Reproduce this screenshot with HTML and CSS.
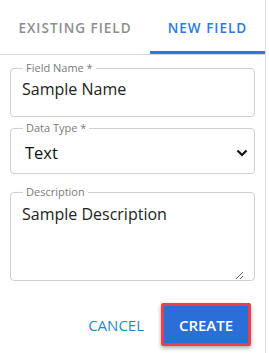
FILE: index.html
```html
<!DOCTYPE html>
<html lang="en">
<head>
  <meta charset="UTF-8" />
  <title>New Field</title>
  <link rel="stylesheet" href="styles.css">
</head>
<body>
  <div class="panel">
    <div class="tabs">
      <div class="tab">Existing Field</div>
      <div class="tab active">New Field</div>
    </div>

    <form class="form">
      <fieldset class="field name">
        <legend>Field Name *</legend>
        <input type="text" value="Sample Name" />
      </fieldset>

      <fieldset class="field type">
        <legend>Data Type *</legend>
        <div class="select">
          <span>Text</span>
          <svg width="12" height="8" viewBox="0 0 12 8"><path d="M1.5 1.5 L6 6 L10.5 1.5" fill="none" stroke="#111" stroke-width="2.2"/></svg>
        </div>
      </fieldset>

      <fieldset class="field area">
        <legend>Description</legend>
        <textarea>Sample Description</textarea>
      </fieldset>

      <div class="actions">
        <button type="button" class="cancel">Cancel</button>
        <button type="button" class="create">Create</button>
      </div>
    </form>
  </div>
</body>
</html>
```

FILE: styles.css
```css
* {
  box-sizing: border-box;
}

body {
  margin: 0;
  font-family: 'Open Sans', sans-serif;
  background-color: #fff;
  color: #222;
}

.panel {
  width: 266px;
  height: 353px;
  border-right: 1px solid #dedede;
  background-color: #fff;
}

.tabs {
  display: flex;
  height: 55px;
  border-bottom: 1px solid #d8d8d8;
}

.tab {
  width: 150px;
  padding-top: 19px;
  text-align: center;
  text-transform: uppercase;
  font-size: 13.5px;
  font-weight: 600;
  letter-spacing: 1px;
  color: #8e8e8e;
}

.tab.active {
  width: 115px;
  color: #2b7ae0;
  border-bottom: 3px solid #2b7ae0;
}

.form {
  padding: 7px 10px 0 10px;
}

.field {
  margin: 0;
  padding: 0 10px 0 11px;
  border: 1px solid #cfcfcf;
  border-radius: 4px;
}

.field legend {
  margin-left: 1px;
  padding: 0 3px;
  font-size: 11px;
  line-height: 12px;
  color: #7a7a7a;
}

.field input,
.field textarea {
  display: block;
  width: 100%;
  border: none;
  outline: none;
  padding: 0;
  font-family: inherit;
  font-size: 16px;
  color: #222;
  background: none;
}

.field.name {
  height: 55px;
}

.field input {
  margin-top: 4px;
  line-height: 22px;
}

.field.type {
  height: 52px;
  margin-top: 5px;
}

.select {
  display: flex;
  justify-content: space-between;
  align-items: center;
  margin-right: -4px;
  padding: 8px 0 0 3px;
  font-size: 16.5px;
  line-height: 22px;
  color: #111;
}

.field.area {
  height: 95px;
  margin-top: 12px;
}

.field textarea {
  margin-top: 6px;
  height: 76px;
  resize: vertical;
  line-height: 20px;
}

.actions {
  display: flex;
  justify-content: flex-end;
  align-items: center;
  gap: 17px;
  padding-right: 4px;
  margin-top: 22px;
}

.actions button {
  font-family: inherit;
  font-size: 15px;
  text-transform: uppercase;
  cursor: pointer;
}

.cancel {
  background: none;
  border: none;
  color: #1f8ad0;
  padding: 0;
}

.create {
  width: 90px;
  height: 43px;
  background-color: #2a6ed8;
  color: #fff;
  font-weight: 600;
  border: 3px solid #e8414d;
  border-radius: 2px;
  box-shadow: 0 2px 4px rgba(0, 0, 0, 0.35);
}
```
